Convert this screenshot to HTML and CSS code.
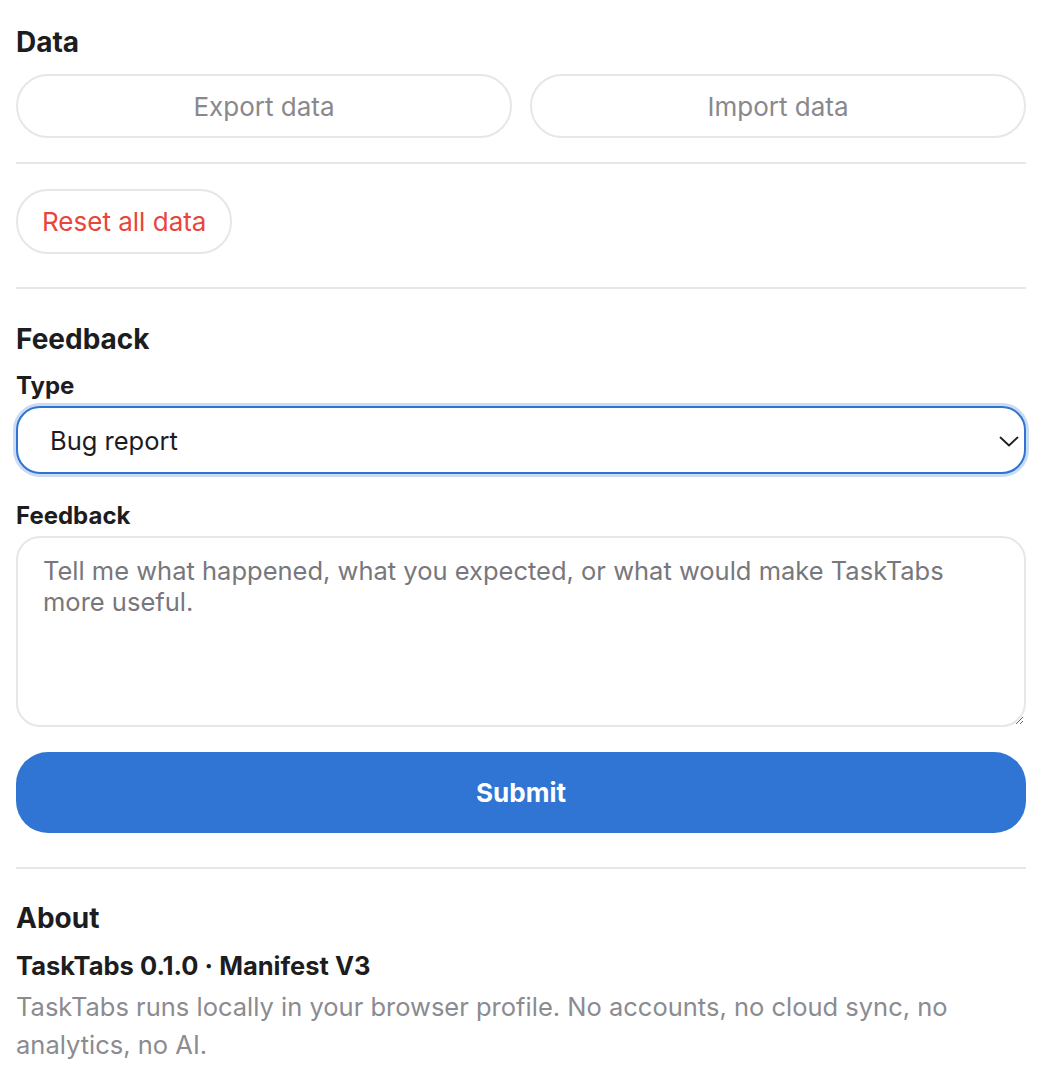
FILE: index.html
```html
<!DOCTYPE html>
<html lang="en">
<head>
<meta charset="utf-8">
<title>TaskTabs Settings</title>
<link rel="stylesheet" href="styles.css">
</head>
<body>
<main class="page">
  <section class="section section-data">
    <h2 class="section-title">Data</h2>
    <div class="btn-row">
      <button class="btn btn-ghost" type="button">Export data</button>
      <button class="btn btn-ghost" type="button">Import data</button>
    </div>
  </section>
  <hr class="divider divider-a">
  <section class="section section-reset">
    <button class="btn btn-danger" type="button">Reset all data</button>
  </section>
  <hr class="divider divider-b">
  <section class="section section-feedback">
    <h2 class="section-title">Feedback</h2>
    <label class="field-label" for="fb-type">Type</label>
    <div class="select-wrap">
      <select id="fb-type" class="select">
        <option>Bug report</option>
        <option>Feature request</option>
        <option>Other</option>
      </select>
      <svg class="chevron" width="20" height="11" viewBox="0 0 20 11" aria-hidden="true">
        <path d="M1.5 1.5 L10 9.5 L18.5 1.5" fill="none" stroke="#1f1f22" stroke-width="1.8" stroke-linecap="round" stroke-linejoin="round"/>
      </svg>
    </div>
    <label class="field-label field-label-2" for="fb-text">Feedback</label>
    <textarea id="fb-text" class="textarea" placeholder="Tell me what happened, what you expected, or what would make TaskTabs more useful."></textarea>
    <button class="btn btn-primary" type="button">Submit</button>
  </section>
  <hr class="divider divider-c">
  <section class="section section-about">
    <h2 class="section-title">About</h2>
    <p class="about-version">TaskTabs 0.1.0 · Manifest V3</p>
    <p class="about-text">TaskTabs runs locally in your browser profile. No accounts, no cloud sync, no analytics, no AI.</p>
  </section>
</main>
</body>
</html>
```

FILE: styles.css
```css
* {
  box-sizing: border-box;
}

html, body {
  margin: 0;
  padding: 0;
  background: #ffffff;
}

body {
  font-family: Inter, "Noto Sans", "Liberation Sans", sans-serif;
  color: #1d1d1f;
  -webkit-font-smoothing: antialiased;
}

.page {
  padding: 25px 20px 0 16px;
  display: flex;
  flex-direction: column;
}

.section {
  display: flex;
  flex-direction: column;
}

.section-title {
  margin: 0;
  font-size: 28px;
  line-height: 34px;
  font-weight: 700;
  color: #1d1d1f;
}

.btn-row {
  margin-top: 15px;
  display: grid;
  grid-template-columns: 1fr 1fr;
  gap: 18px;
}

.btn {
  font-family: inherit;
  border-radius: 32px;
  cursor: pointer;
  background: #ffffff;
}

.btn-ghost {
  height: 64px;
  border: 2px solid #e6e6eb;
  color: #88888d;
  font-size: 26px;
  font-weight: 400;
}

.divider {
  border: 0;
  height: 2px;
  background: #e6e6eb;
  margin: 0;
}

.divider-a {
  margin-top: 24px;
}

.section-reset {
  margin-top: 25px;
  align-items: flex-start;
}

.btn-danger {
  height: 65px;
  padding: 0 24px;
  border: 2px solid #e6e6eb;
  color: #e8463b;
  font-size: 26px;
}

.divider-b {
  margin-top: 33px;
}

.section-feedback {
  margin-top: 33px;
}

.field-label {
  margin-top: 16px;
  font-size: 24px;
  line-height: 28px;
  font-weight: 700;
  color: #1d1d1f;
}

.field-label-2 {
  margin-top: 28px;
}

.select-wrap {
  position: relative;
  margin-top: 6px;
}

.select {
  -webkit-appearance: none;
  appearance: none;
  width: 100%;
  height: 68px;
  padding: 0 60px 0 32px;
  border: 2px solid #2f74d3;
  border-radius: 24px;
  box-shadow: 0 0 0 3px #c9dcf4;
  background: #ffffff;
  font-family: inherit;
  font-size: 25.5px;
  color: #1d1d1f;
  outline: none;
}

.chevron {
  position: absolute;
  right: 7px;
  top: 30px;
  pointer-events: none;
}

.textarea {
  margin-top: 6px;
  width: 100%;
  height: 191px;
  padding: 17px 25px;
  border: 2px solid #e6e6eb;
  border-radius: 24px;
  font-family: inherit;
  font-size: 25.5px;
  line-height: 31px;
  color: #1d1d1f;
  resize: vertical;
  outline: none;
}

.textarea::placeholder {
  color: #77777c;
}

.btn-primary {
  margin-top: 25px;
  height: 81px;
  border: 0;
  border-radius: 32px;
  background: #3075d3;
  color: #ffffff;
  font-size: 26px;
  font-weight: 700;
}

.divider-c {
  margin-top: 34px;
}

.section-about {
  margin-top: 32px;
}

.about-version {
  margin: 15px 0 0;
  font-size: 25.5px;
  line-height: 32px;
  font-weight: 700;
  color: #1d1d1f;
}

.about-text {
  margin: 6px 0 0;
  font-size: 25.5px;
  line-height: 38px;
  color: #8b8b90;
}
```
